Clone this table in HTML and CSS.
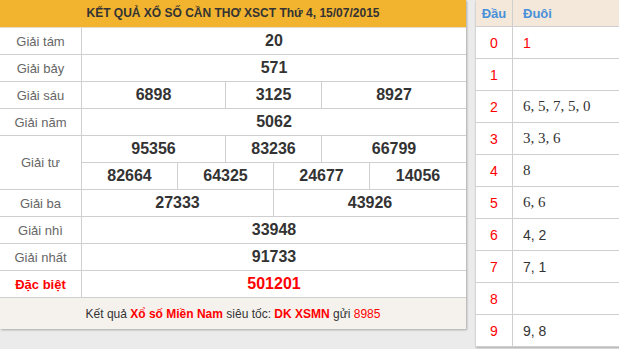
FILE: index.html
```html
<!DOCTYPE html>
<html lang="vi">
<head>
<meta charset="utf-8">
<title>XSCT</title>
<link rel="stylesheet" href="styles.css">
</head>
<body>
<div class="page">
  <div class="result">
    <div class="head">KẾT QUẢ XỔ SỐ CẦN THƠ XSCT Thứ 4, 15/07/2015</div>
    <div class="row"><div class="label">Giải tám</div><div class="cells c1"><div class="cell">20</div></div></div>
    <div class="row"><div class="label">Giải bảy</div><div class="cells c1"><div class="cell">571</div></div></div>
    <div class="row"><div class="label">Giải sáu</div><div class="cells c3"><div class="cell">6898</div><div class="cell">3125</div><div class="cell">8927</div></div></div>
    <div class="row"><div class="label">Giải năm</div><div class="cells c1"><div class="cell">5062</div></div></div>
    <div class="row tall"><div class="label">Giải tư</div>
      <div class="stack">
        <div class="cells c3 sub"><div class="cell">95356</div><div class="cell">83236</div><div class="cell">66799</div></div>
        <div class="cells c4"><div class="cell">82664</div><div class="cell">64325</div><div class="cell">24677</div><div class="cell">14056</div></div>
      </div>
    </div>
    <div class="row"><div class="label">Giải ba</div><div class="cells c2"><div class="cell">27333</div><div class="cell">43926</div></div></div>
    <div class="row"><div class="label">Giải nhì</div><div class="cells c1"><div class="cell">33948</div></div></div>
    <div class="row"><div class="label">Giải nhất</div><div class="cells c1"><div class="cell">91733</div></div></div>
    <div class="row special"><div class="label">Đặc biệt</div><div class="cells c1"><div class="cell">501201</div></div></div>
    <div class="foot">Kết quả <b class="red">Xổ số Miền Nam</b> siêu tốc: <b class="red">DK XSMN</b> gửi <span class="red">8985</span></div>
  </div>
  <div class="loto">
    <div class="lrow lhead"><div class="dau">Đầu</div><div class="duoi">Đuôi</div></div>
    <div class="lrow"><div class="dau">0</div><div class="duoi red">1</div></div>
    <div class="lrow"><div class="dau">1</div><div class="duoi"></div></div>
    <div class="lrow"><div class="dau">2</div><div class="duoi serif">6, 5, 7, 5, 0</div></div>
    <div class="lrow"><div class="dau">3</div><div class="duoi serif">3, 3, 6</div></div>
    <div class="lrow"><div class="dau">4</div><div class="duoi serif">8</div></div>
    <div class="lrow"><div class="dau">5</div><div class="duoi serif">6, 6</div></div>
    <div class="lrow"><div class="dau">6</div><div class="duoi">4, 2</div></div>
    <div class="lrow"><div class="dau">7</div><div class="duoi">7, 1</div></div>
    <div class="lrow"><div class="dau">8</div><div class="duoi"></div></div>
    <div class="lrow"><div class="dau">9</div><div class="duoi">9, 8</div></div>
  </div>
</div>
</body>
</html>
```

FILE: styles.css
```css
* { box-sizing: border-box; }
html, body { margin: 0; padding: 0; }
body {
  background: #ebebeb;
  font-family: "Liberation Sans", Arial, sans-serif;
  color: #333;
  overflow: hidden;
  width: 619px;
  height: 349px;
}
.page {
  display: flex;
  align-items: flex-start;
  gap: 10px;
}
.result {
  width: 466px;
  flex: none;
  background: #fff;
  box-shadow: 1px 1px 2px rgba(0,0,0,0.28);
}
.head {
  height: 28px;
  background: #f2b32f;
  border-bottom: 1px solid #e6dccc;
  display: flex;
  align-items: center;
  justify-content: center;
  font-size: 12px;
  font-weight: bold;
  color: #333;
  padding-bottom: 1px;
}
.row {
  display: flex;
  height: 27px;
  border-bottom: 1px solid #cfcfcf;
}
.row.tall { height: 54px; }
.label {
  width: 82px;
  flex: none;
  border-right: 1px solid #cfcfcf;
  display: flex;
  align-items: center;
  justify-content: center;
  font-size: 13px;
  color: #666;
}
.stack {
  flex: 1;
  display: flex;
  flex-direction: column;
}
.cells {
  flex: 1;
  display: grid;
}
.cells.sub { border-bottom: 1px solid #cfcfcf; }
.c1 { grid-template-columns: 1fr; }
.c2 { grid-template-columns: 1fr 1fr; }
.c3 { grid-template-columns: 3fr 2fr 3fr; }
.c4 { grid-template-columns: 1fr 1fr 1fr 1fr; }
.cell {
  display: flex;
  align-items: center;
  justify-content: center;
  font-size: 16px;
  font-weight: bold;
  color: #333;
  border-right: 1px solid #cfcfcf;
}
.cell:last-child { border-right: none; }
.special .label { color: #f00; font-weight: bold; }
.special .cell { color: #f00; }
.foot {
  height: 31px;
  background: #f5f2ee;
  display: flex;
  align-items: center;
  justify-content: center;
  font-size: 12px;
  color: #333;
  white-space: pre;
}
.red { color: #f00; }
.loto {
  width: 160px;
  flex: none;
  background: #fff;
  box-shadow: 0 1px 2px rgba(0,0,0,0.28);
}
.lrow {
  display: flex;
  height: 32px;
  border-bottom: 1px solid #cfcfcf;
}
.lrow.lhead {
  height: 27px;
  background: #f3e8da;
}
.dau {
  width: 37px;
  flex: none;
  border-right: 1px solid #cfcfcf;
  display: flex;
  align-items: center;
  justify-content: center;
  color: #f00;
  font-size: 14px;
}
.duoi {
  flex: 1;
  display: flex;
  align-items: center;
  padding-left: 10px;
  font-size: 14px;
  color: #333;
}
.lhead .dau, .lhead .duoi {
  color: #4a90d9;
  font-weight: bold;
  font-size: 13px;
}
.duoi.red { color: #f00; }
.duoi.serif {
  font-family: "Liberation Serif", "Times New Roman", serif;
  font-size: 15px;
}
```
